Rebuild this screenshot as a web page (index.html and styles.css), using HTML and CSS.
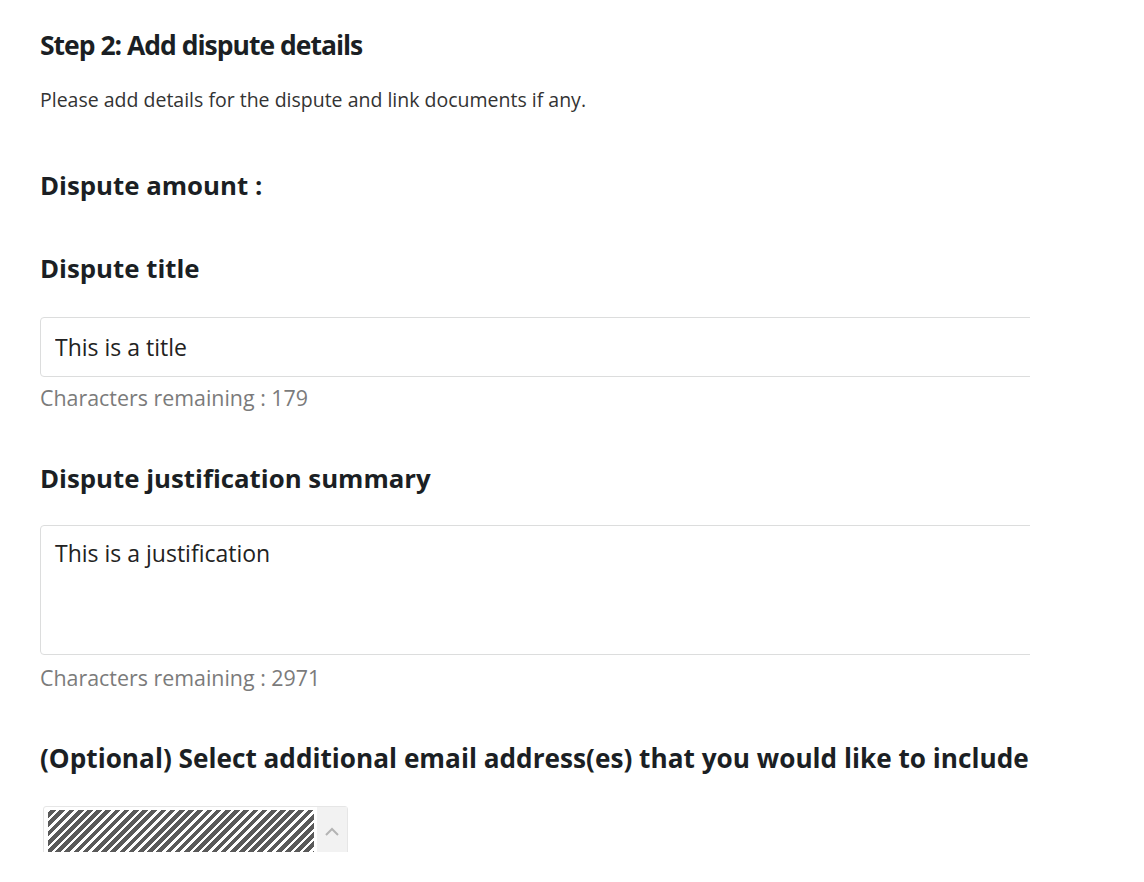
FILE: index.html
```html
<!DOCTYPE html>
<html lang="en">

<head>
  <meta charset="UTF-8">
  <meta name="viewport" content="width=device-width, initial-scale=1.0">
  <title>Add dispute details</title>
  <link rel="stylesheet" href="styles.css">
</head>

<body>

  <div class="page">
    <h2 class="step-title">Step 2: Add dispute details</h2>
    <p class="step-desc">Please add details for the dispute and link documents if any.</p>

    <!-- Amount -->
    <div class="field-label amount-label">Dispute amount :</div>

    <!-- Title -->
    <label class="field-label" for="title">Dispute title</label>
    <input class="text-input" id="title" type="text" value="This is a title">
    <div class="counter">Characters remaining : 179</div>

    <!-- Justification -->
    <label class="field-label" for="summary">Dispute justification summary</label>
    <textarea class="text-area" id="summary">This is a justification</textarea>
    <div class="counter">Characters remaining : 2971</div>

    <!-- Emails -->
    <div class="field-label email-label">(Optional) Select additional email address(es) that you would like to include</div>
    <div class="email-select">
      <div class="email-redacted"></div>
      <div class="email-scroll">
        <svg width="14" height="9" viewBox="0 0 14 9">
          <path d="M1 8 L7 2 L13 8" fill="none" stroke="#b4b4b4" stroke-width="2"/>
        </svg>
      </div>
    </div>
  </div>

</body>

</html>
```

FILE: styles.css
```css
body {
  margin: 0;
  padding: 0;
  background-color: #fff;
  color: #1b1f24;
  font-family: 'Open Sans', 'Noto Sans', sans-serif;
}

.page {
  width: 990px;
  height: 852px;
  padding-left: 40px;
  overflow: hidden;
}

.step-title {
  margin: 30px 0 0;
  font-size: 26.5px;
  line-height: 30px;
  font-weight: 700;
  letter-spacing: -1px;
}

.step-desc {
  margin: 30px 0 0;
  font-size: 19.5px;
  line-height: 20px;
  color: #333;
}

.field-label {
  display: block;
  margin-top: 53px;
  font-size: 25.8px;
  line-height: 30px;
  font-weight: 700;
  white-space: nowrap;
}

.amount-label {
  margin-top: 60px;
}

.email-label {
  font-size: 26.2px;
}

.text-input,
.text-area {
  display: block;
  box-sizing: border-box;
  width: 1100px;
  margin: 34px 0 0;
  padding: 0 14px;
  border: 1px solid #dcdddd;
  border-radius: 4px;
  font-family: inherit;
  font-size: 23px;
  color: #222;
  background: #fff;
  outline: none;
}

.text-input {
  height: 60px;
}

.text-area {
  height: 130px;
  margin-top: 32px;
  padding-top: 12px;
  line-height: 30px;
  resize: none;
}

.counter {
  margin-top: 11px;
  font-size: 21.4px;
  line-height: 20px;
  color: #7b7b7b;
}

.text-area + .counter {
  margin-top: 13px;
}

.counter + .field-label {
  margin-top: 55px;
}

.email-select {
  display: flex;
  width: 305px;
  height: 60px;
  margin-top: 33px;
  margin-left: 3px;
  border: 1px solid #e6e6e6;
  border-radius: 3px;
  box-sizing: border-box;
  padding: 3px 0 0 4px;
}

.email-redacted {
  width: 266px;
  height: 100%;
  background: repeating-linear-gradient(-45deg, #5a5a5a 0 4px, #fff 4px 6.5px);
}

.email-scroll {
  flex: 1;
  margin: -3px 0 0 3px;
  padding-top: 12px;
  background-color: #f2f2f2;
  text-align: center;
}
```
